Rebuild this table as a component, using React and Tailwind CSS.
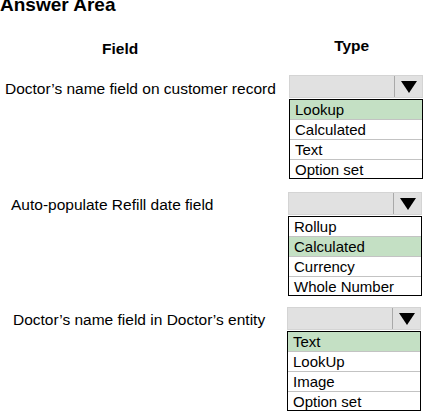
const sections = [
  {
    label: "Doctor’s name field on customer record",
    labelPad: "pl-[5px] pt-[4px]",
    boxPad: "pl-[289px]",
    gap: "mt-[16px]",
    options: ["Lookup", "Calculated", "Text", "Option set"],
    selected: 0,
  },
  {
    label: "Auto-populate Refill date field",
    labelPad: "pl-[11px] pt-[3px]",
    boxPad: "pl-[288px]",
    gap: "mt-[13px]",
    options: ["Rollup", "Calculated", "Currency", "Whole Number"],
    selected: 1,
  },
  {
    label: "Doctor’s name field in Doctor’s entity",
    labelPad: "pl-[13px] pt-[3px]",
    boxPad: "pl-[287px]",
    gap: "mt-[11px]",
    options: ["Text", "LookUp", "Image", "Option set"],
    selected: 0,
  },
];

const Dropdown = ({ options, selected }) => {
  return (
    <div className="w-[134px]">
      {/* closed select */}
      <div className="flex h-[23px] border border-[#d4d4d4] bg-[#e1e1e1]">
        <div className="flex-1" />
        <div className="flex w-[28px] items-center justify-center border-l border-[#a9a9a9]">
          <svg width="16" height="12" viewBox="0 0 16 12">
            <polygon points="0,0 16,0 8,12" fill="#000" />
          </svg>
        </div>
      </div>

      {/* options */}
      <div className="mt-[1px] border border-black bg-white">
        {options.map((opt, i) => {
          const last = i === options.length - 1;
          return (
            <div
              key={opt}
              className={`pl-[5px] text-[15px] leading-[19px] text-black ${
                last ? "h-[18px] leading-[18px]" : "h-[20px] border-b border-[#c3c3c3]"
              } ${i === selected ? "bg-[#c4e0c4]" : "bg-white"}`}
            >
              {opt}
            </div>
          );
        })}
      </div>
    </div>
  );
};

export default function App() {
  return (
    <div className="h-[415px] w-[427px] overflow-hidden bg-white font-['Liberation_Sans',Arial,sans-serif] text-black">
      <div className="-mt-[5px] h-[20px] text-[19px] font-bold leading-[20px]">
        Answer Area
      </div>

      <div className="mt-[24px] flex h-[20px] text-[15.5px] font-bold leading-[20px]">
        <div className="pl-[102px]">Field</div>
        <div className="-mt-[3px] pl-[196px]">Type</div>
      </div>

      {sections.map((s) => (
        <div key={s.label} className={`relative flex ${s.gap}`}>
          <div className={`absolute left-0 top-0 text-[15.5px] leading-[20px] ${s.labelPad}`}>
            {s.label}
          </div>
          <div className={s.boxPad}>
            <Dropdown options={s.options} selected={s.selected} />
          </div>
        </div>
      ))}
    </div>
  );
}
